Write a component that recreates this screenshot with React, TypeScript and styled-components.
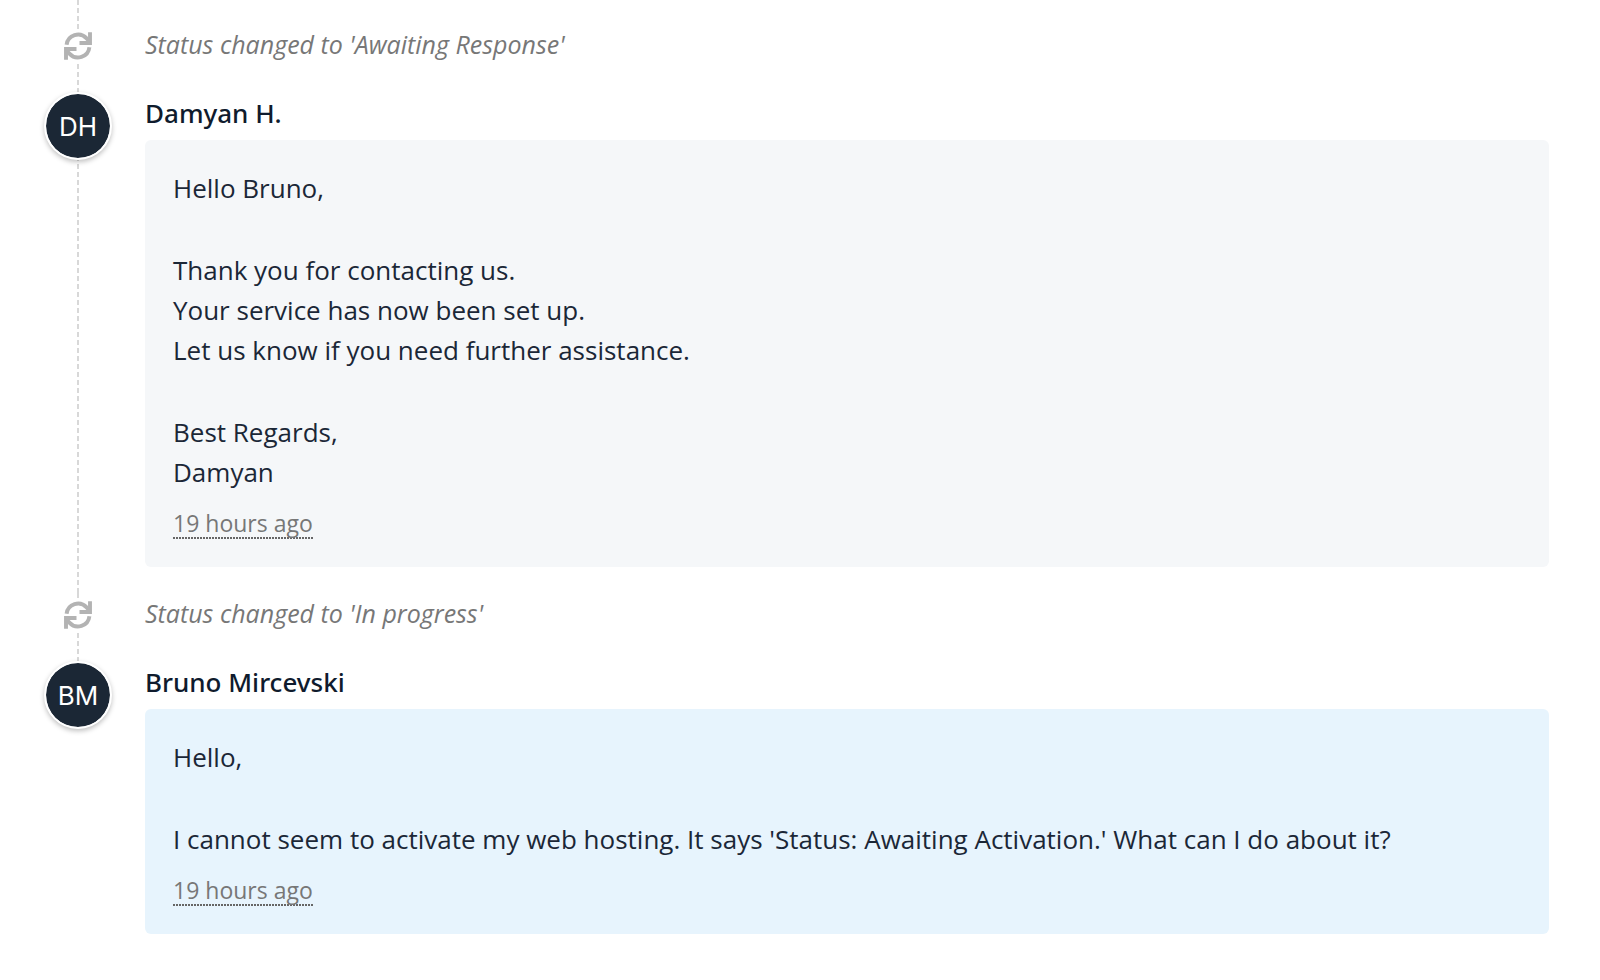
import React from "react";
import styled, { createGlobalStyle, css } from "styled-components";

const GlobalStyle = createGlobalStyle`
  *, *::before, *::after { box-sizing: border-box; }
  body {
    margin: 0;
    background: #fff;
    color: #1b2737;
    font-family: "Segoe UI", "Open Sans", "Noto Sans", sans-serif;
    font-size: 26px;
    line-height: 40px;
  }
`;

const dashedRail = css`
  background: repeating-linear-gradient(#d8d8d8 0 5px, transparent 5px 8px) center top / 2px 100% no-repeat;
`;

const Timeline = styled.ol`
  list-style: none;
  margin: 0;
  padding: 0 51px 47px 44px;
`;

const Entry = styled.li`
  display: grid;
  grid-template-columns: 68px minmax(0, 1fr);
  column-gap: 33px;
`;

const Rail = styled.div<{ $end?: boolean }>`
  display: flex;
  flex-direction: column;
  align-items: center;
  ${(p) => !p.$end && dashedRail}
`;

const EarlierRail = styled(Rail)`
  height: 24px;
`;

const StatusMark = styled.span`
  display: grid;
  place-items: center;
  width: 32px;
  height: 30px;
  margin: 7px 0 31px;
  background: #fff;
  color: #b3b3b3;
`;

const StatusText = styled.p`
  margin: 0;
  color: #777;
  font-size: 25px;
  font-style: italic;
`;

const Avatar = styled.span`
  display: grid;
  place-items: center;
  width: 68px;
  height: 68px;
  padding-top: 2px;
  border: 2px solid #fff;
  border-radius: 50%;
  background: #1b2735 padding-box;
  box-shadow: 0 2px 5px rgba(0, 0, 0, 0.25);
  color: #fff;
  font-family: Inter, sans-serif;
`;

const Message = styled.article<{ $last?: boolean }>`
  padding-bottom: ${(p) => (p.$last ? 0 : 26)}px;
`;

const Author = styled.h2`
  margin: 0 0 6px;
  color: #0f1b2d;
  font-family: "Segoe UI", "Noto Sans", sans-serif;
  font-size: 26px;
  font-weight: 500;
  line-height: 42px;
`;

const Bubble = styled.div<{ $own?: boolean }>`
  display: flex;
  flex-direction: column;
  align-items: flex-start;
  padding: 28px;
  border-radius: 6px;
  background: ${(p) => (p.$own ? "#e7f4fd" : "#f5f7f9")};
`;

const Paragraph = styled.p`
  margin: 0;
  white-space: pre-line;

  & + & {
    margin-top: 42px;
  }
`;

const Time = styled.time`
  margin-top: 17px;
  padding-bottom: 2px;
  background: repeating-linear-gradient(90deg, #666 0 2px, transparent 2px 3px) left bottom / 100% 2px no-repeat;
  color: #777;
  font-size: 23px;
  line-height: 28px;
`;

function RefreshIcon() {
  return (
    <svg width="28" height="28" viewBox="0 0 28 28" fill="none" stroke="currentColor" strokeWidth="3.9" aria-hidden="true">
      <path d="M2.6 12.8A11.5 11.5 0 0 1 22.6 6.4L25 9" />
      <path d="M26 0.3V11H15.5" />
      <path d="M25.4 15.2A11.5 11.5 0 0 1 5.4 21.6L3 19" />
      <path d="M2 27.7V17H12.5" />
    </svg>
  );
}

function StatusEntry({ status }: { status: string }) {
  return (
    <Entry>
      <Rail>
        <StatusMark>
          <RefreshIcon />
        </StatusMark>
      </Rail>
      <StatusText>Status changed to '{status}'</StatusText>
    </Entry>
  );
}

type MessageProps = { initials: string; author: string; paragraphs: string[]; time: string; own?: boolean; last?: boolean };

function MessageEntry({ initials, author, paragraphs, time, own, last }: MessageProps) {
  return (
    <Entry>
      <Rail $end={last}>
        <Avatar>{initials}</Avatar>
      </Rail>
      <Message $last={last}>
        <Author>{author}</Author>
        <Bubble $own={own}>
          {paragraphs.map((text) => (
            <Paragraph key={text}>{text}</Paragraph>
          ))}
          <Time>{time}</Time>
        </Bubble>
      </Message>
    </Entry>
  );
}

export default function App() {
  return (
    <>
      <GlobalStyle />
      <Timeline>
        <Entry aria-hidden="true">
          <EarlierRail />
        </Entry>
        <StatusEntry status="Awaiting Response" />
        <MessageEntry
          initials="DH"
          author="Damyan H."
          paragraphs={[
            "Hello Bruno,",
            "Thank you for contacting us.\nYour service has now been set up.\nLet us know if you need further assistance.",
            "Best Regards,\nDamyan",
          ]}
          time="19 hours ago"
        />
        <StatusEntry status="In progress" />
        <MessageEntry
          initials="BM"
          author="Bruno Mircevski"
          paragraphs={["Hello,", "I cannot seem to activate my web hosting. It says 'Status: Awaiting Activation.' What can I do about it?"]}
          time="19 hours ago"
          own
          last
        />
      </Timeline>
    </>
  );
}
